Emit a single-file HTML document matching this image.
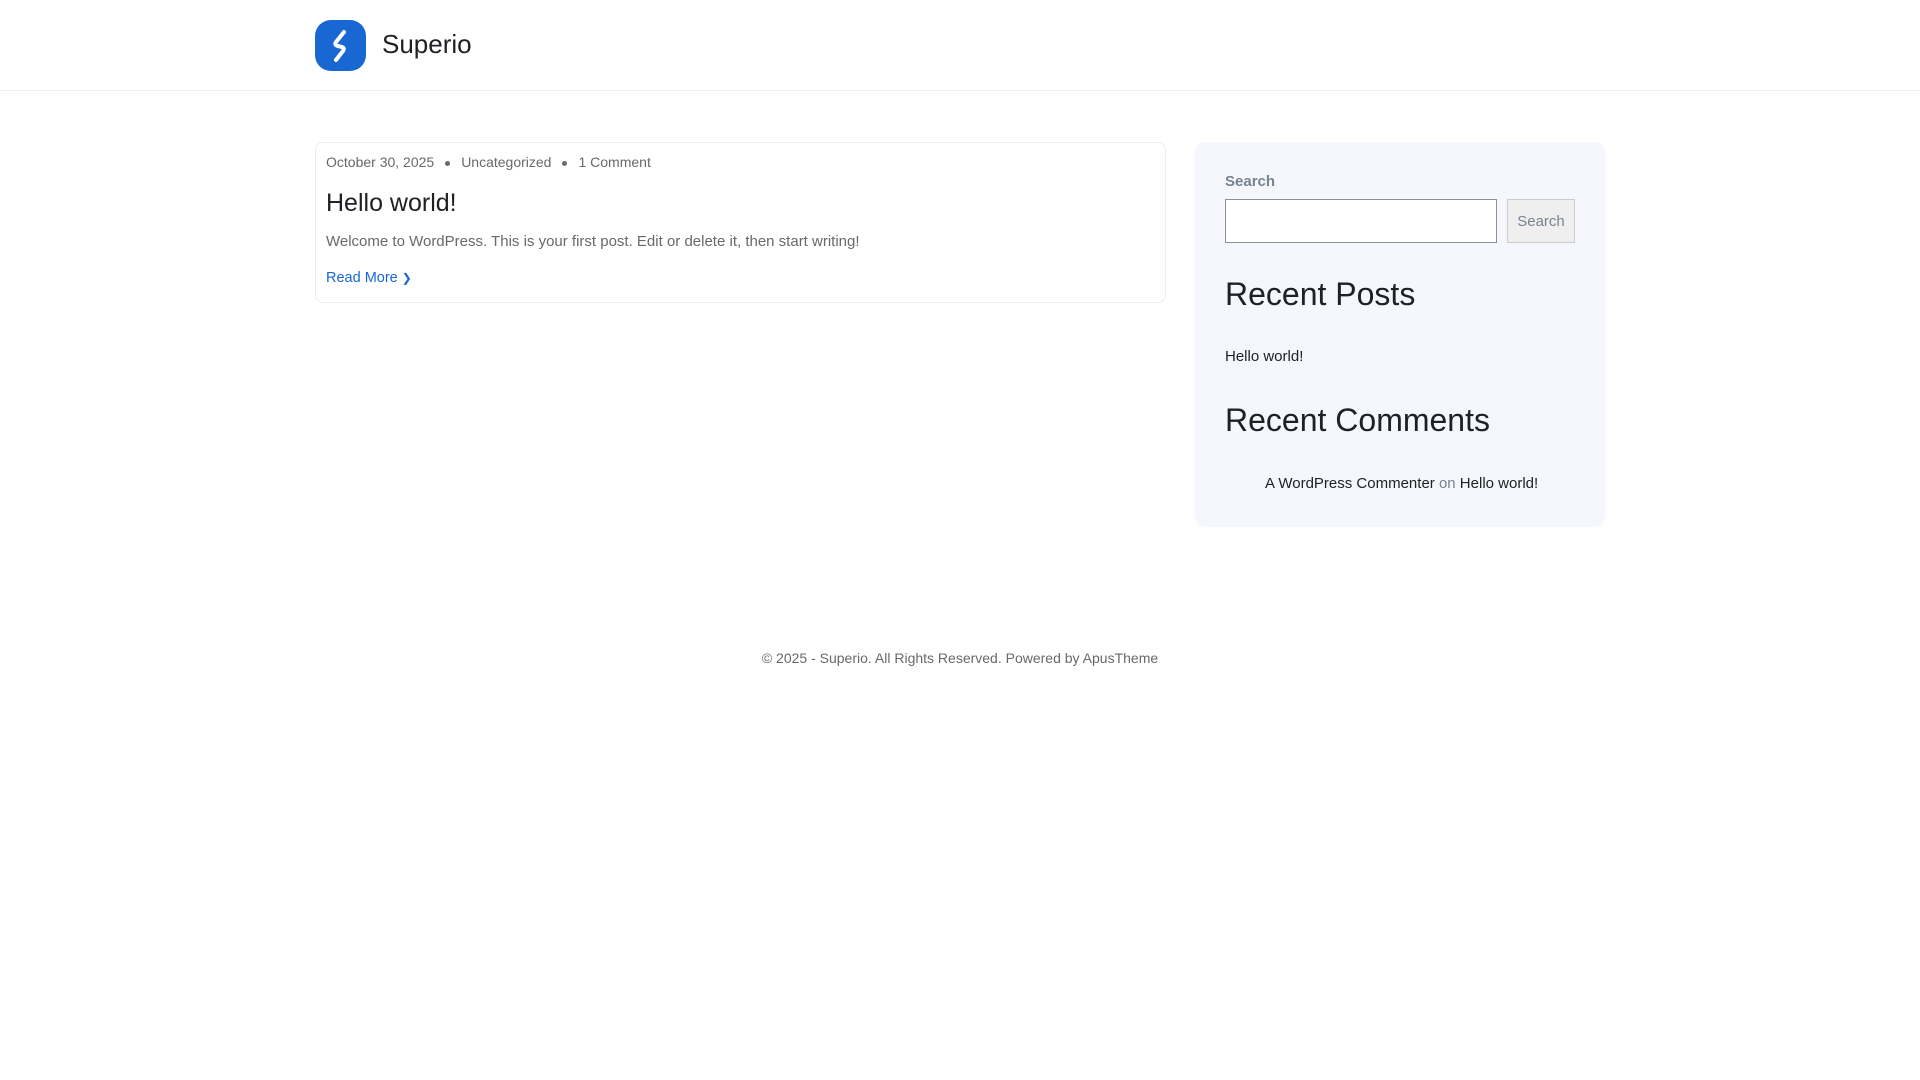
<!DOCTYPE html>
<html><head><meta charset="utf-8"><style>
*{margin:0;padding:0;box-sizing:border-box}
body{width:1920px;height:1080px;background:#fff;font-family:"Liberation Sans",Arial,sans-serif;position:relative;overflow:hidden;color:#202124}
.hdr{position:absolute;left:0;top:0;width:1920px;height:91px;border-bottom:1px solid #eceef2}
.logo{position:absolute;left:315px;top:20px;width:51px;height:51px;background:#1967d2;border-radius:16px}
.brand{position:absolute;left:382px;top:29px;font-size:26px;color:#202124}
.card{position:absolute;left:315px;top:142px;width:851px;height:161px;border:1px solid #eceef2;border-radius:8px}
.meta{position:absolute;left:326px;top:154px;font-size:14px;color:#696969;white-space:nowrap}
.meta .dot{display:inline-block;width:5px;height:5px;background:#696969;border-radius:50%;margin:0 11px;vertical-align:middle}
.title{position:absolute;left:326px;top:189px;font-size:25px;color:#202124}
.exc{position:absolute;left:326px;top:233px;font-size:15px;color:#696969}
.more{position:absolute;left:326px;top:270px;font-size:14.5px;color:#1967d2}
.side{position:absolute;left:1195px;top:142px;width:410px;height:385px;background:#f5f7fc;border-radius:10px}
.lbl{position:absolute;left:1225px;top:173px;font-size:15px;font-weight:bold;color:#77838f}
.inp{position:absolute;left:1225px;top:199px;width:272px;height:44px;border:1px solid #8c8f94;background:#fff}
.btn{position:absolute;left:1507px;top:199px;width:68px;height:44px;border:1px solid #ccc;background:#efefef;color:#77838f;font-size:15px;text-align:center;line-height:44px}
.h2{position:absolute;left:1225px;font-size:32px;color:#202124}
.p{position:absolute;font-size:15px;color:#202124;white-space:nowrap}
.foot{position:absolute;left:0;width:1920px;top:650px;text-align:center;font-size:14px;color:#696969}
</style></head><body>
<div class="hdr"></div>
<div class="logo"><svg width="51" height="51" viewBox="0 0 51 51"><path d="M29 12 L21 22 Q19 25 23 26 L27 27 Q30 28 28 31 L21 40" stroke="#fff" stroke-width="4" fill="none" stroke-linecap="round"/></svg></div>
<div class="brand">Superio</div>
<div class="card"></div>
<div class="meta">October 30, 2025<span class="dot"></span>Uncategorized<span class="dot"></span>1 Comment</div>
<div class="title">Hello world!</div>
<div class="exc">Welcome to WordPress. This is your first post. Edit or delete it, then start writing!</div>
<div class="more">Read More <span style="font-size:12px">&#x276F;</span></div>
<div class="side"></div>
<div class="lbl">Search</div>
<div class="inp"></div>
<div class="btn">Search</div>
<div class="h2" style="top:276px">Recent Posts</div>
<div class="p" style="left:1225px;top:348px">Hello world!</div>
<div class="h2" style="top:402px">Recent Comments</div>
<div class="p" style="left:1265px;top:475px">A WordPress Commenter <span style="color:#77838f">on</span> Hello world!</div>
<div class="foot">© 2025 - Superio. All Rights Reserved. Powered by ApusTheme</div>
</body></html>
